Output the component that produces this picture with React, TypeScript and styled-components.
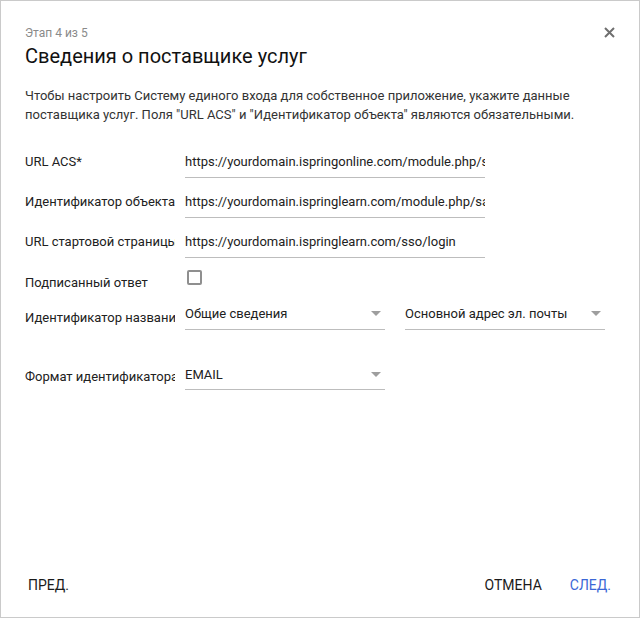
import React from "react";
import styled, { createGlobalStyle } from "styled-components";

const Global = createGlobalStyle`
  html, body { margin: 0; padding: 0; background: #fff; }
  body { font-family: Roboto, "Noto Sans", Arial, sans-serif; }
  * { box-sizing: border-box; }
`;

const Dialog = styled.div`
  width: 640px;
  height: 618px;
  border: 1px solid #cacaca;
  background: #fff;
  display: flex;
  flex-direction: column;
  position: relative;
  color: #212121;
`;

const Header = styled.div`
  padding: 25px 24px 0 24px;
`;

const Step = styled.div`
  font-size: 12px;
  line-height: 15px;
  color: #8a8a8a;
`;

const Title = styled.h1`
  margin: 3px 0 0 0;
  font-size: 20px;
  line-height: 24px;
  font-weight: 400;
  color: #111;
`;

const Close = styled.button`
  position: absolute;
  top: 23px;
  right: 22px;
  width: 16px;
  height: 16px;
  padding: 0;
  border: 0;
  background: transparent;
  display: flex;
  align-items: center;
  justify-content: center;
`;

const Description = styled.p`
  margin: 18px 0 0 0;
  font-size: 13px;
  line-height: 19px;
  color: #333;
`;

const Form = styled.div`
  padding: 22px 24px 0 24px;
  display: flex;
  flex-direction: column;
`;

const Row = styled.div<{ $mt?: number; $h?: number }>`
  display: flex;
  align-items: flex-start;
  margin-top: ${(p) => p.$mt ?? 8}px;
  ${(p) => (p.$h ? `height: ${p.$h}px;` : "")}
`;

const Label = styled.div<{ $pt?: number }>`
  width: 150px;
  margin-right: 10px;
  flex: none;
  padding-top: ${(p) => p.$pt ?? 8}px;
  font-size: 13px;
  line-height: 16px;
  white-space: nowrap;
  overflow: hidden;
  color: #212121;
`;

const Field = styled.div<{ $w: number; $pt?: number }>`
  width: ${(p) => p.$w}px;
  height: 32px;
  padding-top: ${(p) => p.$pt ?? 8}px;
  border-bottom: 1px solid #bdbdbd;
  font-size: 13px;
  line-height: 16px;
  white-space: nowrap;
  overflow: hidden;
  color: #212121;
  display: flex;
  align-items: flex-start;
`;

const FieldText = styled.span`
  flex: 1;
  overflow: hidden;
`;

const Arrow = styled.span`
  width: 0;
  height: 0;
  margin: 5px 4px 0 8px;
  border-left: 5px solid transparent;
  border-right: 5px solid transparent;
  border-top: 5px solid #9e9e9e;
  flex: none;
`;

const Selects = styled.div`
  display: flex;
  gap: 20px;
`;

const Checkbox = styled.span`
  display: block;
  width: 15px;
  height: 15px;
  margin: 4px 0 0 2px;
  border: 2px solid #8f8f8f;
  border-radius: 2px;
`;

const Spacer = styled.div`
  flex: 1;
`;

const Footer = styled.div`
  display: flex;
  align-items: center;
  padding: 0 20px 14px 19px;
`;

const Button = styled.button<{ $primary?: boolean }>`
  height: 36px;
  padding: 0 8px;
  border: 0;
  background: transparent;
  font-family: Roboto, "Noto Sans", Arial, sans-serif;
  font-size: 14px;
  font-weight: 400;
  text-transform: uppercase;
  color: ${(p) => (p.$primary ? "#3b67d6" : "#1a1a1a")};
  cursor: pointer;
`;

const RightButtons = styled.div`
  margin-left: auto;
  display: flex;
  gap: 12px;
`;

export default function App() {
  return (
    <>
      <Global />
      <Dialog>
        <Close aria-label="Закрыть">
          <svg width="11" height="11" viewBox="0 0 11 11">
            <path d="M1 1 L10 10 M10 1 L1 10" stroke="#6f6f6f" strokeWidth="2" />
          </svg>
        </Close>
        <Header>
          <Step>Этап 4 из 5</Step>
          <Title>Сведения о поставщике услуг</Title>
          <Description>
            Чтобы настроить Систему единого входа для собственное приложение, укажите данные
            поставщика услуг. Поля "URL ACS" и "Идентификатор объекта" являются обязательными.
          </Description>
        </Header>
        <Form>
          <Row $mt={0}>
            <Label>URL ACS*</Label>
            <Field $w={300}>
              <FieldText>https://yourdomain.ispringonline.com/module.php/saml/sp/saml2-acs.php</FieldText>
            </Field>
          </Row>
          <Row>
            <Label>Идентификатор объекта</Label>
            <Field $w={300}>
              <FieldText>https://yourdomain.ispringlearn.com/module.php/saml/sp/metadata.php</FieldText>
            </Field>
          </Row>
          <Row>
            <Label>URL стартовой страницы</Label>
            <Field $w={300}>
              <FieldText>https://yourdomain.ispringlearn.com/sso/login</FieldText>
            </Field>
          </Row>
          <Row $h={24}>
            <Label $pt={9}>Подписанный ответ</Label>
            <Checkbox />
          </Row>
          <Row>
            <Label $pt={12}>Идентификатор названия</Label>
            <Selects>
              <Field $w={200}>
                <FieldText>Общие сведения</FieldText>
                <Arrow />
              </Field>
              <Field $w={200}>
                <FieldText>Основной адрес эл. почты</FieldText>
                <Arrow />
              </Field>
            </Selects>
          </Row>
          <Row $mt={28}>
            <Label $pt={11}>Формат идентификатора</Label>
            <Field $w={200} $pt={9}>
              <FieldText>EMAIL</FieldText>
              <Arrow />
            </Field>
          </Row>
        </Form>
        <Spacer />
        <Footer>
          <Button>Пред.</Button>
          <RightButtons>
            <Button>Отмена</Button>
            <Button $primary>След.</Button>
          </RightButtons>
        </Footer>
      </Dialog>
    </>
  );
}
